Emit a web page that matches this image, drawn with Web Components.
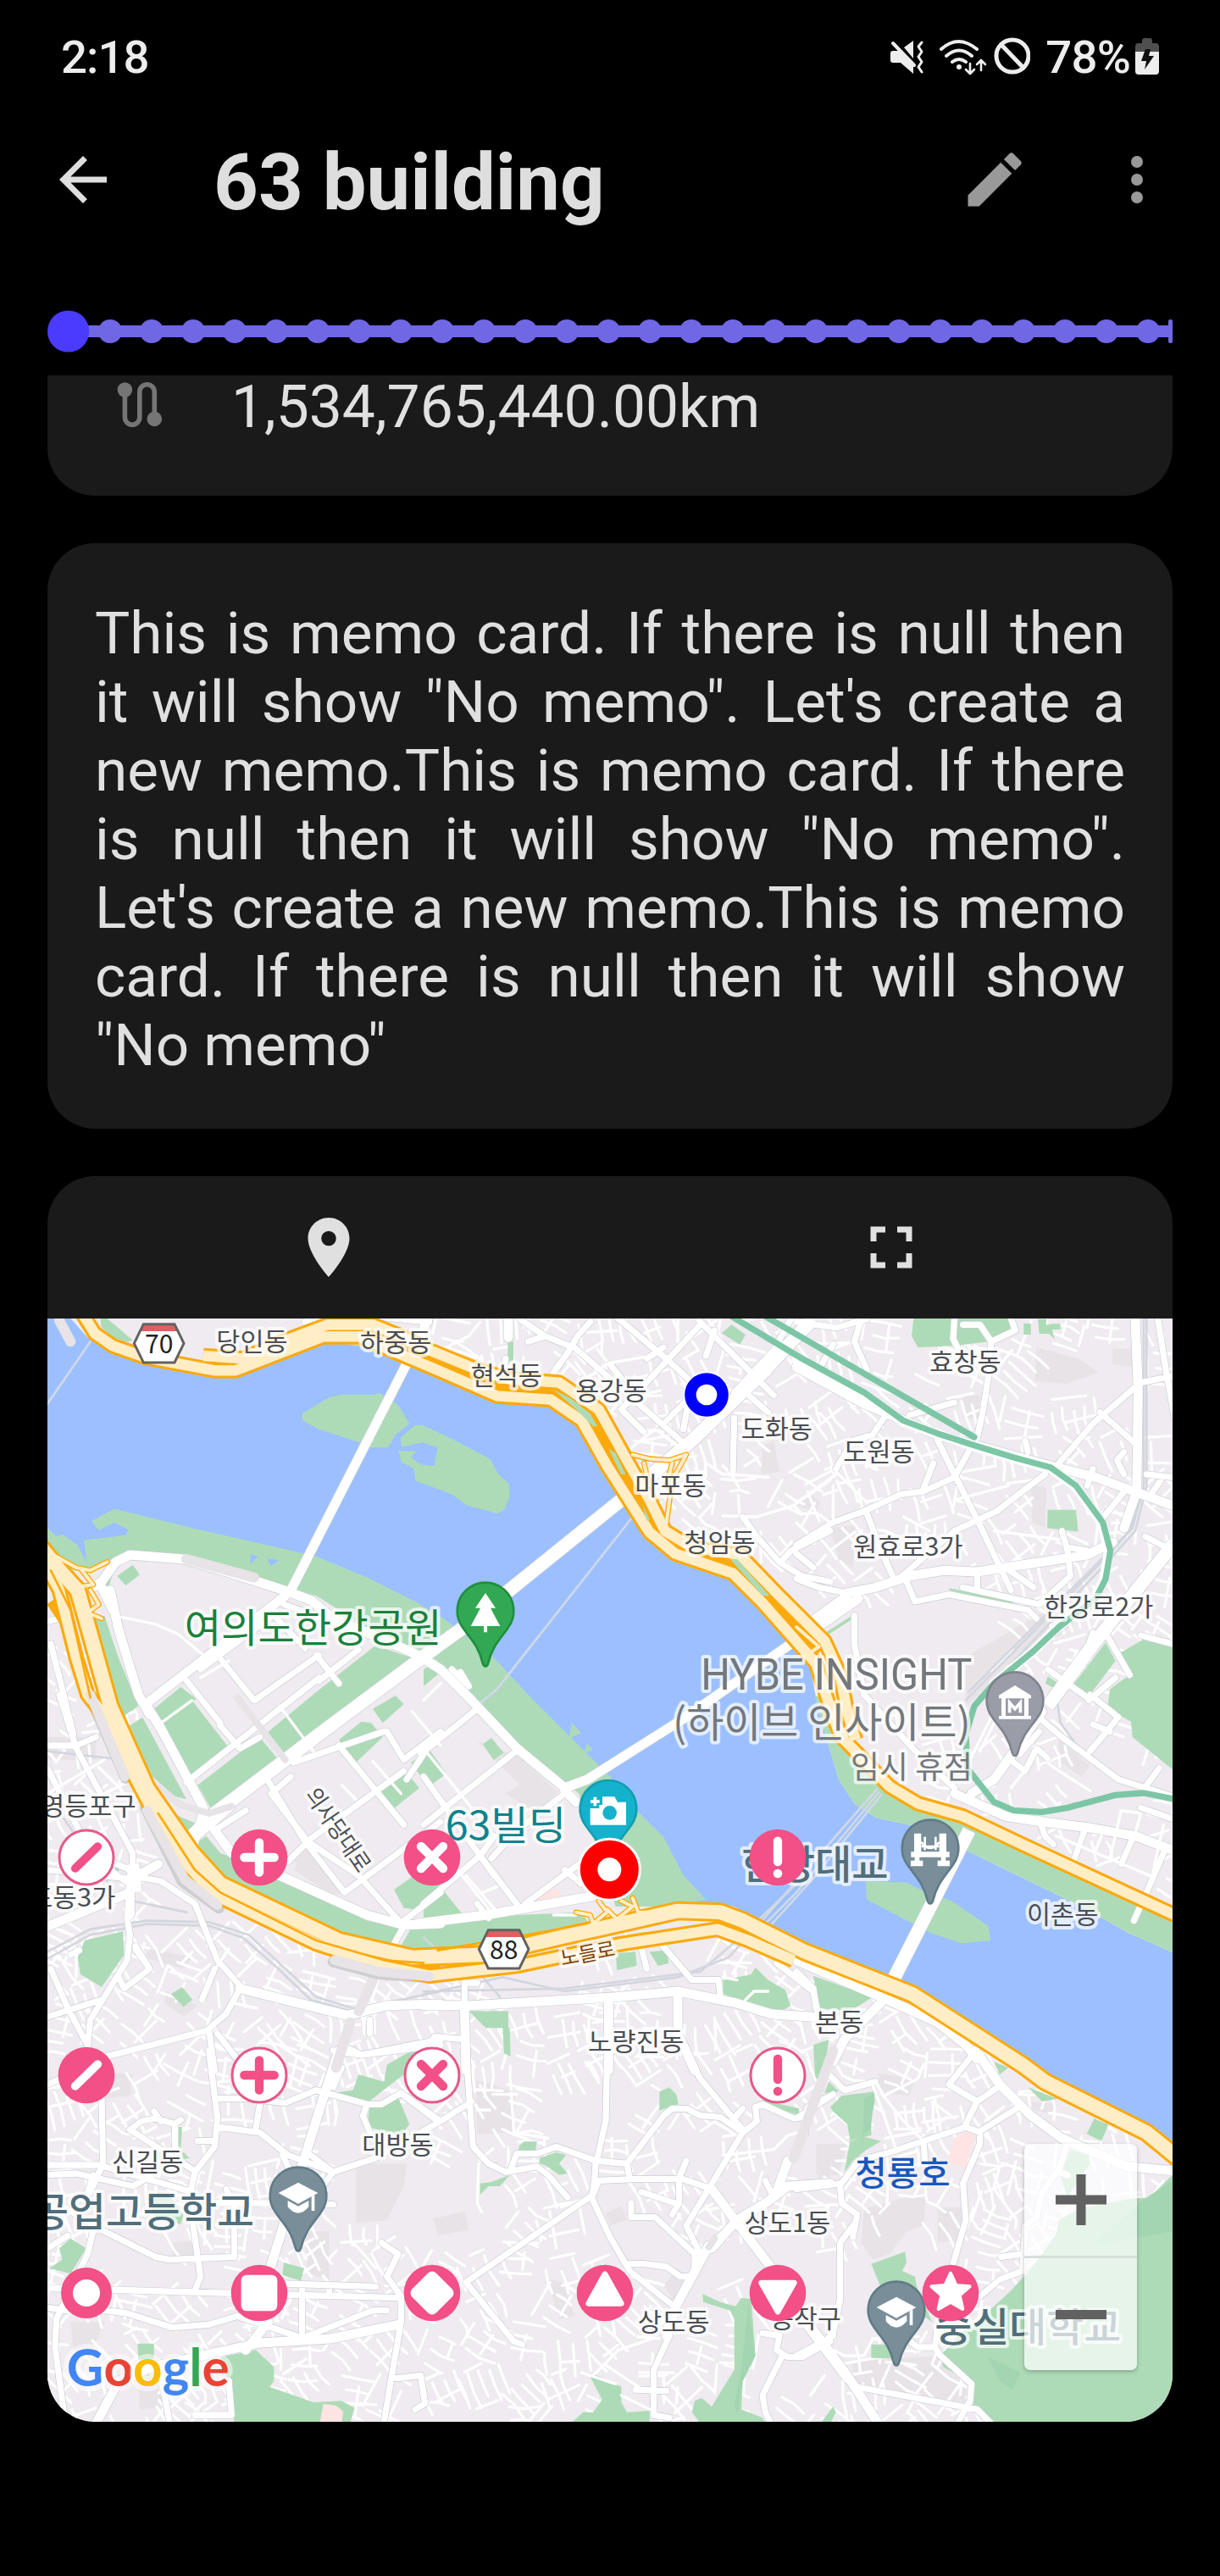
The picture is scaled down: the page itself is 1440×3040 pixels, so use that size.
<!DOCTYPE html>
<html lang="en">
<head>
<meta charset="utf-8">
<title>63 building</title>
<style>
html,body{margin:0;background:#000}
body{width:1440px;height:3040px;overflow:hidden;font-family:Roboto,"Noto Sans CJK KR",sans-serif}
</style>
</head>
<body>
<place-page></place-page>
<script>
const define=(name,html,setup)=>customElements.define(name,class extends HTMLElement{
  constructor(){super();this.attachShadow({mode:'open'}).innerHTML=html;}
  connectedCallback(){if(setup)setup(this,this.shadowRoot);}
});

define('status-bar',`<style>
:host{display:flex;align-items:center;justify-content:space-between;height:134px;padding:0 72px 0 72px;box-sizing:border-box;color:#ededed;font-size:54.5px;font-weight:500;line-height:64px}
.r{display:flex;align-items:center}svg{display:block}.t{letter-spacing:-.9px}.p{margin:0 6px 0 18px;letter-spacing:-.8px}
</style><span class="t">2:18</span><span class="r">
<svg width="166" height="46" viewBox="1050 45 166 46" fill="none" stroke="#ededed" stroke-linecap="round">
<path d="M1051 64q0-3 3-3h9l15 15v12l-15-13h-9q-3 0-3-3zM1067 57l11-8v21z" fill="#ededed" stroke="none"/><path d="M1054 52l25 26" stroke-width="4"/>
<path d="M1088 51l-4 5 4 6-4 6 4 6-4 6 4 6" stroke-width="3" stroke-linejoin="round"/>
<path d="M1111 59q20-18 42 0M1117 67q15-13 30 0M1124 74q8-6 16 0" stroke-width="4"/><circle cx="1132" cy="80" r="3" fill="#ededed" stroke="none"/>
<path d="M1145 76v11m-5-4 5 5 5-5M1158 84v-11m-5 4 5-5 5 5" stroke-width="2.6" stroke-linejoin="round"/>
<circle cx="1195" cy="67" r="19" stroke-width="5"/><path d="M1182 54l26 27" stroke-width="5"/></svg>
<span class="p">78%</span>
<svg width="28" height="44" viewBox="0 0 28 44"><path d="M8 3q0-3 3-3h6q3 0 3 3v3h4q4 0 4 4v6H0v-6q0-4 4-4h4z" fill="#4f4f4f"/><path d="M0 16h28v23q0 4-4 4H4q-4 0-4-4z" fill="#ededed"/><path d="M12 13h6l-2 8h6L11 37l2-10H7z" fill="#111"/></svg></span>`);

define('app-bar',`<style>
:host{display:flex;align-items:center;height:156px;padding:0 56px;box-sizing:border-box}
svg{display:block;width:84px;height:84px;flex:none}
h1{flex:1;margin:0 0 0 112px;padding-top:8px;font-size:92.200px;line-height:108px;font-weight:700;color:#dedede;white-space:nowrap}
.m{margin:0 0 0 84px}
</style>
<svg viewBox="0 0 24 24" fill="#dedede"><path d="M20 11H7.83l5.59-5.59L12 4l-8 8 8 8 1.41-1.41L7.83 13H20v-2z"/></svg>
<h1><slot></slot></h1>
<svg viewBox="0 0 24 24" fill="#999"><path d="M3 17.25V21h3.75L17.81 9.94l-3.75-3.75L3 17.25zM20.71 7.04a1 1 0 0 0 0-1.41l-2.34-2.34a1 1 0 0 0-1.41 0l-1.83 1.83 3.75 3.75 1.83-1.83z"/></svg>
<svg class="m" viewBox="0 0 24 24" fill="#999"><circle cx="12" cy="6" r="2"/><circle cx="12" cy="12" r="2"/><circle cx="12" cy="18" r="2"/></svg>`);

define('step-track',`<style>:host{display:block;height:153px;padding:0 56px}svg{display:block}</style><svg width="1328" height="153"></svg>`,(h,r)=>{
  let s='<rect x="24" y="94" width="1304" height="14" fill="#7067e5"/><rect x="1323" y="87" width="5" height="28" rx="2" fill="#7067e5"/>';
  for(let i=1;i<27;i++)s+=`<circle cx="${25+i*49}" cy="101" r="14" fill="#7067e5"/>`;
  r.querySelector('svg').innerHTML=s+'<circle cx="24.6" cy="101" r="24.6" fill="#4a3bff"/>';
});

define('distance-card',`<style>
:host{display:flex;align-items:flex-start;height:142px;margin:0 56px;background:#1a1a1a;border-radius:0 0 56px 56px;box-sizing:border-box;padding-left:82px;color:#e0e0e0;font-size:69.5px;line-height:82px}
svg{display:block;margin:8px 81px 0 0;flex:none}span{margin-top:-3px;white-space:nowrap}
</style><svg width="54" height="53" viewBox="0 0 54 53" fill="#757575"><circle cx="9.4" cy="9" r="8.8"/><circle cx="44.3" cy="43.4" r="8.8"/><path d="M9.4 9V41.5a8.7 8.7 0 0 0 17.4 0V11.5a8.7 8.7 0 0 1 17.5 0V43" fill="none" stroke="#757575" stroke-width="5.6"/></svg><span><slot></slot></span>`);

define('memo-card',`<style>
:host{display:block;height:691px;margin:56px 56px 0;padding:66px 56px 0;box-sizing:border-box;background:#1a1a1a;border-radius:56px;color:#e0e0e0;font-size:69.300px;line-height:81px;text-align:justify}
</style><slot></slot>`);

define('map-toolbar',`<style>
:host{display:flex;height:168px;align-items:center}span{flex:1;display:flex;justify-content:center}svg{width:84px;height:84px}
</style><span><svg viewBox="0 0 24 24" fill="#e0e0e0"><path d="M12 2C8.13 2 5 5.13 5 9c0 5.25 7 13 7 13s7-7.75 7-13c0-3.870-3.130-7-7-7zm0 9.500a2.500 2.500 0 1 1 0-5 2.500 2.500 0 0 1 0 5z"/></svg></span>
<span><svg viewBox="0 0 24 24" fill="#e0e0e0"><path d="M7 14H5v5h5v-2H7v-3zm-2-4h2V7h3V5H5v5zm12 7h-3v2h5v-5h-2v3zM14 5v2h3v3h2V5h-5z"/></svg></span>`);

define('zoom-control',`<style>
:host{position:absolute;left:1153px;top:974px;width:133px;height:267px;border-radius:7px;background:rgba(255,255,255,.7);box-shadow:0 2px 5px rgba(0,0,0,.25);display:flex;flex-direction:column}
span{flex:1;display:flex;align-items:center;justify-content:center}span+span{border-top:3px solid #d7dfdb}svg{display:block}
</style><span><svg width="60" height="60" fill="#616161"><path d="M24.500 0h11v24.500H60v11H35.500V60h-11V35.500H0v-11h24.500z"/></svg></span><span><svg width="60" height="11"><path d="M0 0h60v11H0z" fill="#616161"/></svg></span>`);

/* Pink category markers: solid or outlined disc with a glyph. */
const K='#f25086';
define('map-marker',`<style>:host{position:absolute;width:68px;height:68px;transform:translate(-50%,-50%)}svg{display:block}</style><svg width="68" height="68" viewBox="-102 -102 204 204"></svg>`,(h,r)=>{
  const k=h.getAttribute('kind'),o=h.hasAttribute('outline'),f=o?K:'#fff';
  h.style.left=(h.getAttribute('x')-47)/3+'px';h.style.top=(h.getAttribute('y')-48)/3+'px';
  const st=`stroke="${f}" stroke-linecap="round" stroke-linejoin="round" fill="${f}"`;
  const g={slash:`<path d="M-40 39L40-39" stroke-width="29" ${st}/>`,
    plus:`<path d="M-53 0H53M0-53V53" stroke-width="31" ${st}/>`,
    cross:`<path d="M-39-39L39 39M39-39L-39 39" stroke-width="31" ${st}/>`,
    bang:`<path d="M0-58V15" stroke-width="31" ${st}/><circle cy="57" r="16" fill="${f}"/>`,
    ring:`<circle r="48" fill="#fff"/>`,
    square:`<rect x="-64" y="-64" width="128" height="128" rx="20" fill="#fff"/>`,
    diamond:`<rect x="-60" y="-60" width="120" height="120" rx="20" transform="rotate(45)" fill="#fff"/>`,
    up:`<path d="M0-67L-58 37H58Z" stroke-width="20" ${st}/>`,
    down:`<path d="M0 66L-58-36H58Z" stroke-width="20" ${st}/>`,
    star:`<path d="M0-70L20-27 68-23 32 8 43 57 0 32-43 57-32 8-68-23-20-27Z" stroke-width="12" ${st}/>`}[k];
  r.querySelector('svg').innerHTML=(k=='ring'?`<circle r="90" fill="${K}"/>`:o?`<circle r="96" fill="#fff" stroke="#e55a88" stroke-width="9"/>`:`<circle r="100" fill="${K}"/>`)+g;
});

define('city-map',`<style>:host{display:block}svg{display:block}text{font-family:"Noto Sans CJK KR",sans-serif}</style><svg width="1328" height="1302" viewBox="48 48 3984 3906"></svg>`,(h,r)=>{
  const T={A:[0,0],B:[1380,0],C:[2700,0],D:[0,1380],E:[1380,1380],F:[2700,1380],G:[0,2640],H:[1380,2640],I:[2700,2640]};
  const at=(t,inner)=>`<g transform="translate(${T[t]})">${inner}</g>`;
  const area=(fill,list)=>`<g fill="${fill}">`+list.map(([t,d])=>at(t,`<path d="${d}"/>`)).join('')+'</g>';
  const line=(c,w,list,cap='round')=>`<g fill="none" stroke="${c}" stroke-width="${w}" stroke-linejoin="round" stroke-linecap="${cap}">`+list.map(([t,d])=>at(t,`<path d="${d}"/>`)).join('')+'</g>';
  let seed=20;const rnd=()=>(seed=(seed*16807)%2147483647)/2147483647;

  /* Residential street blocks, laid out as loose rotated grids. */
  const quiet=[[3200,1250,260],[1960,2890,120],[2900,3500,170],[3080,3450,180],[1260,3130,190],[150,2130,90],[780,2500,90],[720,3000,90],[1500,3200,130],[2700,2950,110],[2080,3250,150],[2600,3260,60],[3700,250,150],[2700,980,100],[420,3400,120],[2560,3450,100],[1780,2300,200],[2300,2370,150],[2700,3800,160],[3850,1700,120],[2250,3480,110],[1700,3520,90],[2300,3000,110],[300,3220,110],[3950,400,120],[2850,1150,120],[420,3820,120]];
  const block=(cx,cy,sz)=>{
    if(quiet.some(q=>Math.hypot(q[0]-cx,q[1]-cy)<q[2]))return '';
    const a=rnd()*Math.PI/2,c=Math.cos(a),s=Math.sin(a),st=32+rnd()*22;let d='';
    const p=(u,v)=>(cx+u*c-v*s).toFixed(0)+' '+(cy+u*s+v*c).toFixed(0);
    for(let v=-sz;v<=sz;v+=st){if(rnd()<.25)continue;const a0=-sz*(.3+rnd()*.6),b0=sz*(.3+rnd()*.6);
      d+='M'+p(a0,v)+'L'+p((a0+b0)/2,v+rnd()*14-7)+'L'+p(b0,v+rnd()*12-6);}
    for(let u=-sz;u<=sz;u+=st*1.9){if(rnd()<.3)continue;const a0=-sz*(.2+rnd()*.7),b0=sz*(.2+rnd()*.7);
      d+='M'+p(u,a0)+'L'+p(u+rnd()*18-9,b0);}
    return d;};
  let streets='';
  for(let y=90;y<1500;y+=150)for(let x=1520;x<4050;x+=165)streets+=block(x+rnd()*50-25,y+rnd()*50-25,78);
  for(let y=1600;y<2200;y+=165)for(let x=3200;x<4050;x+=200)streets+=block(x,y,60);
  for(let y=1300;y<2300;y+=140)for(let x=80;x<420;x+=140)streets+=block(x,y,66);
  for(let y=2290;y<4000;y+=142)for(let x=80;x<4050;x+=150)streets+=block(x+rnd()*60-30,y+rnd()*60-30,80);

  const river='M48 48L130 48 190 115 270 165 400 205 640 250 715 248 870 190 1030 130 1200 150 1440 255 1640 335 1830 350 1930 425 2080 670 2165 815 2260 890 2465 960 2680 1200 2750 1290 2780 1440 2800 1510 2850 1680 2905 1765 2980 1815 3120 1845 3290 1925 3700 2125 3880 2225 4032 2292V2970L3960 2910 3605 2740 3465 2645 3340 2555 3130 2430 3000 2380 2740 2270 2480 2130 2340 2115 2240 2060 1800 1600 1500 1250 900 960 330 880 190 930 48 830Z';
  const bank='M48 790L80 820 100 812 155 850 187 915 178 833 325 815 335 795 285 770 230 797 205 765 285 722 560 790 1000 890 1190 970 1350 1050 1450 1110 1620 1240 1750 1380 2040 1670 2140 1795 2230 1885 2300 2020 2380 2105 2240 2130 2060 2130 1930 1730 1880 1690 1560 1430 1430 1260 1190 1150 1000 1030 860 990 340 870 270 900 190 940 110 940 48 860Z';
  const green=[['A',bank],
    ['A','M950 385L1045 328 1085 318 1200 318 1225 312 1290 355 1330 420 1280 460 1255 503 1195 505 1150 485 1010 440 950 408ZM1298 470L1350 425 1375 425 1440 455 1510 490 1615 545 1645 600 1682 632 1685 680 1665 725 1640 738 1530 708 1480 670 1350 622 1345 578 1300 555 1292 517 1355 518 1335 540 1370 565 1418 570 1430 505 1375 487 1302 502ZM295 960L350 920 375 955 325 993ZM235 48H260L350 125 320 135 285 120 240 80ZM228 985L275 920 285 930 265 1000ZM1210 1205L1340 1250 1170 1390 885 1620 825 1515 1000 1370ZM425 1430L520 1352 575 1395 450 1480ZM215 1110L250 1100 300 1250 370 1420 312 1460 270 1330 215 1170ZM1200 1430L1280 1383 1310 1413 1235 1480ZM920 1060L1030 1090 960 1110Z'],
    ['B','M1090 70L1140 105 1120 140 1055 100ZM298 130H318V200H298ZM0 1290L55 1260 60 1300 0 1350ZM60 1230L120 1180 230 1240 300 1360 180 1400Z'],
    ['C','M415 48H770L755 90 680 130 560 145 430 150 408 110ZM805 65h25v40h-25ZM855 50h30v22l20-5h30v20h-30l10 35-20-20h-35ZM890 725H990L998 803 888 790ZM540 1003L770 1045 765 1062 545 1012ZM205 1095L210 1105 105 1172 95 1165ZM1095 1195L1130 1260 1035 1385 980 1345ZM1332 1195L1235 1180 1150 1230 1180 1310 1110 1360 1100 1440 1140 1450 1185 1475 1190 1530 1332 1645ZM890 1315L930 1340 915 1358 882 1340Z'],
    ['D','M800 150L580 320 625 400 700 385 875 242ZM450 100L560 20 700 200 565 298ZM330 115L385 80 540 370 500 360 420 290ZM490 420L595 465 550 510ZM610 500L660 560 760 600 1080 750 1180 800 1300 825 1260 890 1130 880 1050 850 800 730 680 665 600 600 568 530ZM1340 820H1440V915L1290 905ZM1080 160L1160 95 1195 100 1235 150 1140 240ZM1335 240L1400 195 1440 250 1400 330ZM1205 345L1310 265 1365 330 1260 415ZM1275 690L1360 630 1440 650V690L1350 760 1310 755ZM180 870L315 838 320 920 240 1035 165 990 155 930ZM525 1035L562 1080 530 1105 485 1060ZM285 590L313 610 290 632Z'],
    ['E','M0 200L20 195 80 280 20 325 0 300ZM210 175L240 152 283 205 248 232ZM0 680H60L140 780 0 790ZM0 820L200 800 330 780 560 770 580 800 380 860 190 910H0ZM515 155L525 100 558 135ZM570 205L577 173 600 195ZM1060 1010L1160 990 1175 965 1220 1010 1280 1045 1300 1100 1270 1118 1180 1100 1060 1060ZM160 1120H300V1180H220ZM280 1180H305L308 1280 285 1270ZM680 915L750 910 755 960 685 975ZM800 910L860 905 868 950 830 960Z'],
    ['F','M65 0L100 130 150 300 205 385 280 435 420 465 590 545 1000 745 1180 845 1332 912V800L900 600 500 410 330 320 160 190 100 20ZM245 660L390 665 460 700 550 730 680 820 687 870 585 880 480 845 250 725ZM60 995L270 1070 190 1120 80 1110ZM60 1240L115 1220 90 1390 66 1350Z'],
    ['G','M1150 85L1240 110 1250 50 1320 10 1400-10 1380 30 1180 185 1060 150 1130 140ZM1190 190L1240 190 1290 165 1330 260 1300 300 1180 270ZM90 700L130 665 185 700 130 790 55 770 100 740ZM885 750L957 770 945 815 880 795ZM367 1037H425V1090L370 1095ZM660 1085L785 1060 850 1120 850 1170 835 1190 990 1245 1090 1240 1135 1265 1120 1320H710L695 1190ZM512 270L525 270 520 350 550 380 530 385 512 330ZM410 540L440 500 480 510 530 580 520 615 430 590Z'],
    ['H','M520 1320L565 1280 600 1280 632 1235 590 1155 610 1148 700 1190 700 1245 720 1280 800 1275V1320ZM988 862L1050 890 1105 905 1125 875 1160 880 1175 1080 1130 1170 1125 1270 1200 1300 1210 1320H980L950 1280 960 1240 985 1230 1020 1260 1100 1130 1100 950 1085 920 990 890ZM200 470L240 465 305 440 270 480 230 480 200 510ZM340 335L355 322H402L395 355 335 355ZM410 380L470 360 505 370 480 400 510 435 480 440 430 405 410 400ZM835 145L870 130 895 155 902 190 870 200 835 212ZM1200 175L1330 205 1330 228 1200 190Z'],
    ['I','M120 200L160 160 275 145 278 180 265 240 265 300 190 318 180 260 130 215ZM190 320L240 305 300 320 250 350 200 390 170 430ZM1332 440L1250 520 1180 525 1000 560 930 600 920 650 840 760 760 850 640 960 580 1000 510 1080 520 1120 630 1180 625 1260 700 1320H1332ZM265 755L385 712 390 750 375 780 420 800 425 830 480 960 300 840ZM265 1040H340V1090L265 1088ZM970 350L1035 370 1040 400 960 520 930 430ZM820 130L925 170 870 180ZM1055 240L1105 262 1080 320 1028 295ZM100 150L115 110 150 145ZM700 40L750 60 720 85ZM90 1313L130 1260 140 1280 120 1320Z']];
  const dark=[['C','M850 150L1000 190 1070 240 950 280 845 270ZM600 1245L880 1085 1020 980 980 1130 600 1420ZM590 320H650V400H590ZM830 640L885 645 880 790 835 770ZM120 790L210 780 200 930 150 900ZM1120 155H1190V220L1120 210ZM5 700L40 665 85 700 70 735Z'],
    ['B','M1200 500L1240 480 1260 590 1195 600ZM1310 705L1370 665 1405 700 1390 735Z'],
    ['D','M410 900L560 930 530 970 390 930ZM470 1050L580 1100 530 1140 460 1090ZM48 150H220V230H48Z'],
    ['F','M930 160L1040 250 1010 290 920 230Z'],
    ['G','M1140 400L1320 400 1310 480 1250 600 1140 610ZM250 80L350 80 340 160 250 170ZM130 960H250L200 1080 140 1060ZM370 1100H480V1260L375 1270ZM960 640H1045V810L970 790ZM490 680L580 670 600 730 490 735Z'],
    ['H','M185 105L265 125 320 150V290L190 295ZM35 595L145 570 160 635 50 655ZM645 575L700 550 720 600 660 620ZM850 830L900 770 930 800 890 890ZM440 810L490 820 535 940 480 950ZM1400 330H1440V450H1400Z'],
    ['I','M240 560L460 500 450 620 390 640 330 720 270 740 230 680ZM200 1100L500 1080 600 1190 600 1245 200 1185ZM500 555h90v120h-90ZM290 80L420 100 400 160 300 150ZM70 330L180 330 150 440 70 440ZM820 180L925 190 900 220 830 210Z']];
  const rail=[['C','M1230 50V640L1190 790 1100 890 600 1400M1218 660L1180 800 1080 900 610 1370M1240 50V640L1200 800 1110 900 640 1400'],['D','M48 910L200 830 400 800 620 805 760 850 880 960 1000 1070 1130 1110 1300 1080 1440 1050M48 935L200 850 400 812 620 818 740 860 860 965 980 1080 1120 1120M48 200L270 225M100 430L300 720 540 770'],['E','M0 1060L280 1000 500 1050 900 1000 1080 930 1200 800M0 1050L500 1040 980 980 1120 860 1330 660M210 1000L270 1070M0 860L50 905'],['F','M920 0L935 100 1000 190']];
  const r14=[['A','M310 1105L430 1130 510 1165 600 1240'],
    ['D','M870 40L990 200M1200 235L1300 350M1090 320L1140 370M450 100L560 20M590 -60L690 -120M700 1090L790 1110M1340 60L1440 180M150 900L150 1000M690 900L650 960M130 500L250 650M48 450L350 300M48 350L250 230'],
    ['E','M0 190L250 500M60 -40L0 20M120 620L240 770M150 640L260 770M210 700L260 680M390 400L330 420M1060 1000L1110 1010M1140 1080L1170 1050 1220 1050M460 780H540'],
    ['B','M730 510L820 440 900 500M80 150L160 110 200 60M80 150L200 190M1060 600L1090 600 1220 610M1060 600L1000 560M1130 750L1180 750 1310 710 1440 620M1310 710L1340 740 1390 735 1440 770M610 230L660 205 780 185M900 50V130'],
    ['C','M140 600L0 700M140 590L250 700M130 640L130 760M560 690L750 640M380 750L470 800M700 800L930 830'],
    ['F','M750 0L650 200M700 60L580 300M830 240L760 330M900 250L1040 340M920 500L1250 640M1110 580L1150 410 1220 420 1200 490M1060 550L1080 500M1260 640L1300 460'],
    ['H','M310 150L320 290 440 310M245 155H330M190 210H235M195 400L190 540 205 570M600 1150L690 1060 810 1020M700 1220L800 1270M640 1110L760 1190M560 1140L680 1180M1060 370L1240 350 1290 300 1360 280M740 800L850 830'],
    ['I','M500 1060L480 1110 540 1160 600 1190M270 120L350 340M280 110L310 160 430 100 450 50M300 150L380 250 440 310M650 400L720 410 700 480M655 500L620 600M700 490L780 600 775 630M480 180L560 240M130 1060L170 1080H240L270 1020H330M50 1220L100 1150']];
  const r24=[['A','M885 1060L1250 1190M650 1240L780 1400M540 1330L660 1480M1000 1240L1080 1340M1150 1220L1010 1330M780 1400L1010 1240M860 1110L960 1215M590 1290L860 1090M60 1200L140 1520M48 1120L90 1110M960 60L1020 48M1200 40L1400 60'],
    ['B','M340 50L430 110 540 155 910 480M370 130L430 110M680 40L870 200 1010 330M590 60L545 110 510 170 460 240M975 55L1240 320M980 70L700 370M1030 90L1000 180M700 370L780 450M1100 400L1095 590M1140 310L1220 380M1240 160L1100 310M860 410L940 330 920 440M660 210L700 260M790 190L850 150M1300 50L1240 160 1220 240M290 190L285 240M1440 800L1300 870 1265 910M100 1290L150 1340M130 1300L160 1350M1440 980L1340 960 1260 910 1180 820 1130 750'],
    ['C','M0 970L80 1000 180 1020M0 850L130 770 240 730 370 670 450 660 560 610 620 500M500 480L640 760 760 1010M450 650L485 560M560 800L710 730 800 660 880 600M350 980L560 800M250 740L300 870 350 980M760 48L775 90 690 130 680 250 660 380 640 470M560 48L555 120 570 150M590 70L650 70 690 130M310 400L270 460 200 480 140 580M930 560L1050 420 1200 290M1075 380L1200 490M1160 520L1135 550 1160 600M1280 50L1310 240 1340 400M1220 275L1340 250M940 800L960 870 970 960 860 1060M590 1000L860 1060M390 980L420 1050 540 1025 820 1080 850 1110M740 930L840 1000M640 950V1000M970 860L1030 870M0 880L60 930M810 480L820 520M1240 600L1332 610M1250 680L1290 620M1050 580L1030 640M1080 760L1170 650M1040 1190L1050 1160M1332 870L1235 820M890 1290L1030 1390M1100 1170L1180 1310M1130 1320L1035 1400M1332 1200L1220 1170M0 60L140 80 250 50M230 50L205 130 250 230M130 140L90 210M400 390L560 345M205 1100V1200L240 1380'],
    ['D','M540 310L1010 -60M820 290L960 520 1100 700M910 290L840 350 970 520M1080 180L1310 460M1250 130L1310 230 1440 130M920 240L1240 130M900 590L980 510 1310 270M1100 700L1440 450M560 520L700 400M640 480L750 410M660 110L730 190 800 150M48 620L330 650M90 0L150 190 350 560V640M48 180L150 180 220 150M340 680L330 790 340 850 330 940 200 1150 190 1250M48 1140L240 1080M60 970L120 1110 190 1240M340 640L450 660 570 740 650 940 730 1030M640 970L595 1080M730 1040L680 1130 610 1190 260 1280M620 1190L640 1330M650 1200L720 1290M1110 1250L1160 1275 1440 1220M1190 1150V1200M360 900L410 970 320 1040 300 1000M360 890L410 970M48 260L200 560 340 620M270 620L350 680M130 920L160 905M1310 820L1260 910M1310 820L1150 640 970 520M1310 800L1440 700'],
    ['E','M-10 210L190 50M-60 300L0 210M0 460L340 190M0 290L250 640M0 740L200 570M360 740L550 600M190 740L230 790M145 1100V1020H190M770 890L790 970M840 880L950 1010H1045L1050 1070M1250 950L1380 1050 1400 1150M500 620L560 670M240 580L330 480 500 350M250 500L200 570 330 740M0 1270L40 1210 140 1220'],
    ['F','M870 90L940 150 1140 300 1332 360M1140 80L1040 200M1040 0L1140 80M1050 105L1110 130M1020 480L985 580M1190 510L1150 600M1300 560L1240 700 1195 800M1220 400L1332 440M1240 320L1285 260M770 240L810 270 850 190 890 225M860 440L880 500 910 530M0 1140H60M0 980L60 1040 70 1110M240 0L330 100 450 230 560 330M860 130L790 210'],
    ['G','M240 170L245 400 200 500M48 405H230L560 500M48 440L150 435 350 480 420 440M210 440L185 520M620 0L650 240 640 340 570 430 550 520 590 800 570 850M650 170H760L890 185 1000 140 1180 190 1230 190 1300 150 1430 250M1180 190L1165 230 1190 290M1300 150L1440 250M800 190L785 280M650 270L800 290 900 370 1060 430 1210 380 1440 250 1550 180M880 370L900 410M980 370L1060 430 1030 470M48 840L560 855 1290 875M880 825L1210 835M950 840V1010M1045 830V870M250 920L330 930 490 980 620 970 720 940 930 1010M970 1010L1200 920 1250 920M1230 680L1290 720 1250 800 1300 870 1300 960 1240 1313M650 540H830M1000 545H1060M710 540V730L480 740M480 740L430 730 230 630 100 550M210 640L190 720 80 950 75 1050 110 1310M682 490L700 540M340 280L560 420M340 280L380 250 430 240 500 260V340M425 215L450 250M520 245L500 260M48 700L120 655M580 320H640M690 1170L700 1290 570 1290M480 1313L450 1150M1285 1160L1370 1150 1385 1250 1350 1270M48 120L260 30M48 910L120 920M1060 130L1090 60M1060 0L1160 15 1440 -20'],
    ['H','M150 0L175 340 230 400 290 430 400 410 440 440 510 520M650 0L645 250 615 380M930 10L980 100 1130 280M310 415L330 365H400L470 340 610 390 720 400 850 230 880 205H930L980 230 1050 235 1130 290 1180 250 1175 200 1200 190 1310 240 1340 235M1130 290L930 620 980 720M150 820L600 510 620 460 740 455H920L1020 490M610 390L605 460 595 520 660 660 730 780 880 900M720 400L730 455M930 390L905 450V540L880 580M770 500L890 540M735 540V590H820L960 720V780M730 755H780L860 765 910 800H940M150 820L320 1030 350 1040M750 1200L860 1205M1200 1000L1260 1010 1250 1060 1290 1085H1340L1440 1030M1270 1080L1200 1220 1210 1280 1230 1320M870 1010L815 1130 815 1290 870 1300M1100 240L1130 205M1210 460L1230 500M1040 665L1070 640'],
    ['I','M540 120L635 0M540 120L640 180 600 260M640 180L720 125M780 205L650 285M0 490L160 470 220 390 330 360 450 320 600 270 650 290V330L590 470 600 600 550 770M450 320L455 390M155 480L160 540 215 580 200 660M200 620L155 680V880L130 1000 80 1050M960 330L930 420 870 500 850 590 810 620 800 780 720 810 650 870M725 730L800 720M930 430L960 440M0 1080L130 1010M210 1190L640 1270 690 1320M490 1050L510 1080 620 1180 615 1240 570 1320M390 1020L430 1050 490 1050 500 980M120 90L170 140 280 110M130 155L40 200 30 300M0 240L130 155']];
  const r34=[['A','M1395 48L1370 110 910 1010M190 1010L240 980 290 910 340 885 530 900 700 950 900 1015 980 1045 1060 1110 1250 1190 1360 1240 1440 1290M270 1010L300 1150 370 1380 410 1450M240 1000L280 1080M400 1410L890 1030M200 48L240 120 330 150'],
    ['B','M300 50V115M60 1290L170 1400 330 1570M1300 1200L1440 1110 1540 1040'],
    ['C','M1200 50L1210 300 1205 660 1160 790M180 1020L280 1000 400 960 520 940 640 945 1030 885 1120 840M0 220L240 350 500 460 900 570 1060 610 1250 680 1332 710M40 1130L180 1030'],
    ['D','M400 40L450 120 600 400M640 480L700 560 870 640 1180 780 1310 815 1440 810M48 820L340 700M350 650L440 600M730 1040L1110 1135 1250 1100 1440 1095M600 420L560 540M340 690V780'],
    ['E','M-20 810L220 780 560 720 660 700M330 190L500 330 580 300 920 85 1300 -180M0 1100L170 1100 680 1070 900 1050 1100 1090 1230 1130 1440 1145M655 1080V1330M900 1060V1200L960 1330M145 1100L150 1330M500 340L540 380'],
    ['F','M560 350L740 430 870 450 1030 470 1200 500 1332 550M0 940L300 1070 500 1160 600 1240 640 1290M300 1090L170 1220 130 1300M870 60L700 300 620 350'],
    ['G','M1080 0L1030 150 840 760M220 1320L300 1170 420 1120 640 1070 800 1035 1050 1020 1290 970M830 960L750 1060'],
    ['H','M1020 490L1110 610 1240 780M1010 690L890 910 860 1010M1020 700L1110 600 1210 540 1290 480 1440 470M1290 390L1250 500M1350 960L1500 1160'],
    ['I','M635 0L720 120 830 230 940 310 1170 410 1332 425M30 950L180 1150 290 1320']];
  const r50=[['A','M560 1880L640 1800 1010 1520 1440 1200 1510 1150 2080 690 2330 480 2580 240 2720 90 2760 50'],['C','M1332 850L1060 1190 890 1420'],['F','M612 480L345 1005'],['D','M350 600L360 700']];
  const hwy=[['A','M165 20L215 100 280 145 400 187 640 232 715 232 870 172 1025 112 1150 112 1440 235 1640 322 1830 335 1940 410 2030 570 2180 805 2270 880 2475 950 2580 1055 2770 1270 2830 1460 2860 1530 3030 1705 3130 1765 3290 1810 3500 1910 4040 2160'],
    ['A','M600 180L740 190 880 130 1040 70 1200 70 1300 110 1400 160 1560 225 1680 262 1860 275 2000 370 2100 550 2180 690 2235 800 2330 858 2500 885 2630 1020 2800 1190 2855 1310 2880 1440 2910 1540'],
    ['A','M30 900L90 1010 150 1250 190 1380 230 1430 340 1640 430 1810 510 1945 640 2088 1000 2262 1250 2345 1400 2375 1710 2340 2080 2262 2420 2210 2530 2250 2690 2320']];
  const hwyWide=[['A','M10 840L100 950 155 1010 195 1150 270 1420 400 1710 560 1940 660 2050 1080 2250 1340 2310 1600 2300 1880 2235 2280 2145 2430 2150 2510 2180 2730 2290 3110 2440 3500 2690 3580 2750 3940 2930 4050 3020']];
  const median=[['D','M60 -330L120 -240 190 0 230 60 420 420 540 610 660 700 1020 870 1240 945 1440 960'],['A','M1480 210L1650 290 1840 300 1960 380 2110 640 2200 810 2290 870 2480 920 2620 1060 2780 1230']];
  const ramp=[['A','M60 880L150 930 200 940 260 910M170 940L210 990 150 1000M200 1010L230 1060 190 1090 240 1110'],['B','M740 530L800 545 870 550 930 530 880 620 860 770M780 560L800 640M880 560L860 640'],['E','M540 770L590 780 600 810 650 770 620 730M680 790L650 760M690 790L740 750 700 730M740 720L760 770 820 770'],['C','M0 1140L80 1210 50 1230']];
  const teal=[['B','M1090 40L1340 190 1560 310 1700 410 1820 455 1960 500 2090 540 2220 575 2310 640 2405 770 2432 870 2415 970 2380 1040 2250 1140 2160 1225 2020 1340 1950 1420 1920 1520 1925 1640 2020 1760 2090 1790 2190 1795 2280 1780 2450 1735 2550 1728 2660 1750M1210 40L1520 220 1950 468']];
  let s='<rect x="48" y="48" width="3984" height="3906" fill="#efebf0"/>';
  s+=area('#e7e3e7',dark);
  s+=`<path d="${streets}" fill="none" stroke="#fff" stroke-width="9.500" stroke-linecap="round" stroke-linejoin="round"/>`;
  s+=`<path d="M190 1000L340 880 900 1000 1430 1250 1930 1720 2060 2100 1500 2280 1180 2250 640 2040 300 1300Z" fill="#efebf0"/><path d="${river}" fill="#9cc0ff"/><path d="M240 960L340 880 900 1000 1430 1250 1930 1720 2060 2120 1500 2200 1180 2200 640 2000 300 1300Z" fill="#efebf0"/>`;
  s+=area('#e7e3e7',[['E','M190 165L340 220 475 345 400 420 290 350 340 320ZM-460 590L-410 540 -290 700 -330 680Z'],['D','M920 620L960 550 1090 700 1060 710Z']]);
  s+=area('#aedbb7',green);
  s+=area('#a3d5b2',[['I','M680 1085L795 1140 765 1200 720 1170ZM1332 460L1240 520 1190 560 1050 690 1332 640ZM240 170L278 150 262 280 235 300Z'],['H','M1150 900L1175 1080 1130 1170 1110 1290 1100 1250 1125 1130Z']]);
  s+=area('#ffe4e4',[['E','M370 750L440 680 480 690 495 730Z'],['G','M1025 1250L1070 1257 1095 1277 1090 1320H1012Z'],['I','M600 285L635 285 600 415 535 395 560 310Z']]);
  s+=area('#9cc0ff',[['A','M768 882L795 890 765 918ZM825 898L868 903 840 925Z']]);
  s+=line('#d3d6de',8,rail);
  s+=line('#d0d8e8',8,[['A','M200 130L48 350M2120 750L1640 1360 1580 1410'],['F','M285 335L0 660 -130 810M292 345L0 700 -120 820M300 355L60 650 -90 815']]);
  s+=line('#c9cdd5',37,r34)+line('#c9cdd5',26,r24)+line('#c9cdd5',51,r50,'butt');
  s+=line('#fff',10,r14)+line('#fff',22,r24)+line('#fff',33,r34)+line('#fff',47,r50,'butt');
  s+=line('#e7e3e7',36,[['H','M1450 0L1310 380'],['D','M1200 1010L1150 1120M1120 1160L1070 1320'],['A','M540 900L780 965M90 55L130 130']]);
  s+=line('#e7e3e7',24,[['D','M720 10L890 230M430 320L520 390 620 420 700 395'],['H','M1030 665L1010 695']]);
  s+=line('#fff',34,[['C','M0 195L230 315 380 415 640 505 900 580 985 640 1080 770 1106 870 1090 970 1055 1040 925 1140 840 1225 700 1340']]);
  s+=line('#7cc6a6',22,teal);
  s+=line('#cfcfd2',40,[['D','M195 0L325 295M395 400L525 660 655 755M1060 945L1220 988 1410 1002']]);
  s+=line('#fbaa0d',20,ramp)+line('#fbaa0d',34,median,'butt')+line('#fbaa0d',56,hwy,'butt')+line('#fbaa0d',68,hwyWide,'butt');
  s+=line('#ffedc5',12,ramp)+line('#ffedc5',37,hwy,'butt')+line('#ffedc5',50,hwyWide,'butt');
  s+=line('#e7e3e7',34,[['D','M200 0L322 290M400 410L535 655 650 745M1065 940L1222 980 1400 998']]);
  s+=line('#fbaa0d',8,[['D','M440 420L570 620 660 700 1000 870 1240 940 1380 950'],['A','M60 940L130 1080 200 1390'],['F','M-1270 905L-900 840 -740 810']]);
  s+=area('#aedbb7',[['B','M460 300L520 330 590 385 615 430 600 430 540 370ZM655 510L680 525 715 600 700 600ZM1085 900L1110 900 1225 1030 1200 1030ZM775 705L800 760 790 765Z']]);

  /* Labels: text, x, baseline, width, size, colour */
  const G='#4b4e53',L=(t,x,y,w,z=90,c=G,wt=400,halo=.72)=>`<text x="${x}" y="${y}" textLength="${w}" lengthAdjust="spacingAndGlyphs" font-size="${z}" font-weight="${wt}" fill="${c}" stroke="#fff" stroke-opacity="${halo}" stroke-width="24" paint-order="stroke" stroke-linejoin="round">${t}</text>`;
  const lab=[['당인동',646,162,253],['하중동',1155,165,253],['현석동',1547,282,253],['용강동',1918,336,253],['도화동',2504,470,253],['마포동',2128,673,253],['청암동',2302,874,253],['효창동',3172,234,253],['도원동',2866,552,253],['원효로3가',2902,887,388],['한강로2가',3576,1100,388],['이촌동',3516,2190,253],['본동',2766,2572,172],['노량진동',1962,2641,340],['영등포구',24,1806,338],['영등포동3가',-190,2129,480],['신길동',276,3067,253],['대방동',1162,3006,253],['상도1동',2516,3283,305],['상도동',2138,3632,255],['동작구',2608,3620,250]];
  s+=lab.map(a=>L(...a)).join('');
  s+=L('HYBE INSIGHT',2362,1362,960,157,'#73787d').replace('<text','<text style="font-family:Roboto"');
  s+=L('(하이브 인사이트)',2262,1531,1055,144,'#73787d')+L('임시 휴점',2892,1676,432,112,'#73787d');
  s+=L('여의도한강공원',533,1193,911,139,'#1b803b',400)+L('63빌딩',1457,1892,428,139,'#0e838d',400);
  s+=L('한강대교',2506,2032,520,139,'#516e7b',500)+L('공업고등학교',-8,3262,788,139,'#516e7b',500)+L('숭실대학교',3190,3669,660,139,'#516e7b',500)+L('청룡호',2908,3118,337,118,'#1958be',500,.15);
  s+='<g transform="translate(1078 1858) rotate(55.500)">'+L('의사당대로',-170,30,340,82)+'</g>';
  s+='<g transform="translate(1961 2296) rotate(-11)">'+L('노들로',-98,26,196,72,'#7a4310')+'</g>';
  const shield=(x,y,n)=>`<g transform="translate(${x} ${y})"><path d="M-88 0L-55-68H55L88 0 55 68H-55Z" fill="#fff"/><path d="M-68-43L-55-68H55L68-43Z" fill="#db6262"/><path d="M-88 0L-55-68H55L88 0 55 68H-55Z" fill="none" stroke="#626262" stroke-width="9"/><text x="-50" y="34" textLength="100" lengthAdjust="spacingAndGlyphs" font-size="94" fill="#222">${n}</text></g>`;
  s+=shield(443,136,'70')+shield(1664,2281,'88');

  const pin=(x,y,f,b,g)=>`<g transform="translate(${x} ${y})"><path d="M0 194Q-7 194-10 182C-25 120-55 95-80 58A100 100 0 1 1 80 58C55 95 25 120 10 182Q7 194 0 194Z" fill="${f}" stroke="${b}" stroke-width="8"/>${g}</g>`;
  const cap='<g fill="#fff"><path d="M-70-11L0-48 70-11 0 27Z"/><path d="M-37 16L0 36 37 16V38Q20 60 0 60T-37 38ZM47 2L58-5V52H47Z"/></g>';
  s+=pin(1599,1085,'#33a852','#1e8e3e','<path d="M0-65L36-12H18L52 52H6V74H-6V52H-52L-18-12H-36Z" fill="#fff"/>');
  s+=pin(3474,1402,'#9a9da8','#80848c','<path d="M0-55L57-20V-9H48V53H57V64H-57V53H-48V-9H-57V-20ZM-33-9V53H33V-9Z" fill="#fff" fill-rule="evenodd"/><path d="M-19 42V6L0 28 19 6V42" fill="none" stroke="#fff" stroke-width="11"/>');
  s+=pin(2034,1785,'#16b1cc','#129eaf','<path d="M-64-3H-32V-15H-21V-44H22L33-25H63V56H-64Z" fill="#fff"/><path d="M-63-27H-31M-47-43V-11" stroke="#fff" stroke-width="11"/><circle cx="5" cy="13" r="25" fill="#16b1cc"/>');
  s+=pin(3174,1925,'#7a8e9a','#5f7c88','<path d="M-57-54H-32V11H32V-54H57V11H68V30H55V42H69V62H26V42H38V30H-38V42H-26V62H-69V42H-55V30H-68V11H-57Z" fill="#fff"/><path d="M-32-24Q0 20 32-24M-19-42V5M19-42V5M-32-8H32" stroke="#fff" stroke-width="8" fill="none"/>');
  s+=pin(936,3155,'#7a8e9a','#5f7c88',cap)+pin(3054,3560,'#7a8e9a','#5f7c88',cap);
  s+='<circle cx="2382" cy="318" r="80" fill="#00f" stroke="#fff" stroke-width="5"/><circle cx="2382" cy="318" r="37" fill="#fff"/>';
  s+='<circle cx="2038" cy="1999" r="108" fill="red" stroke="#fff" stroke-width="9"/><circle cx="2038" cy="1999" r="42" fill="#fff"/>';
  const lg=['#4285f4','#ea4335','#fbbc04','#4285f4','#34a853','#ea4335'];
  s+='<text x="116" y="3828" textLength="576" lengthAdjust="spacingAndGlyphs" font-size="186" stroke="#fff" stroke-opacity=".5" stroke-width="36" stroke-linejoin="round" paint-order="stroke" style="font-family:Lato;font-weight:700">'+[...'Google'].map((c,i)=>`<tspan fill="${lg[i]}">${c}</tspan>`).join('')+'</text>';
  r.querySelector('svg').innerHTML=s;
});

define('map-card',`<style>
:host{display:block;height:1470px;margin:56px 56px 0;border-radius:56px;background:#1a1a1a;overflow:hidden}.m{position:relative;height:1302px}
</style><map-toolbar></map-toolbar><div class="m"><city-map></city-map>
<map-marker kind="slash" outline x="184" y="1955"></map-marker><map-marker kind="plus" x="796" y="1955"></map-marker><map-marker kind="cross" x="1408" y="1955"></map-marker><map-marker kind="bang" x="2632" y="1955"></map-marker>
<map-marker kind="slash" x="184" y="2726"></map-marker><map-marker kind="plus" outline x="796" y="2726"></map-marker><map-marker kind="cross" outline x="1408" y="2726"></map-marker><map-marker kind="bang" outline x="2632" y="2726"></map-marker>
<map-marker kind="ring" x="184" y="3497"></map-marker><map-marker kind="square" x="796" y="3497"></map-marker><map-marker kind="diamond" x="1408" y="3497"></map-marker><map-marker kind="up" x="2020" y="3497"></map-marker><map-marker kind="down" x="2632" y="3497"></map-marker><map-marker kind="star" x="3244" y="3497"></map-marker>
<zoom-control></zoom-control></div>`);

define('place-page',`<style>:host{display:block;width:1440px;height:3040px;background:#000}</style>
<status-bar></status-bar><app-bar>63 building</app-bar><step-track></step-track>
<distance-card>1,534,765,440.00km</distance-card>
<memo-card>This is memo card. If there is null then it will show "No memo". Let's create a new memo.This is memo card. If there is null then it will show "No memo". Let's create a new memo.This is memo card. If there is null then it will show "No memo"</memo-card>
<map-card></map-card>`);
</script>
</body>
</html>
